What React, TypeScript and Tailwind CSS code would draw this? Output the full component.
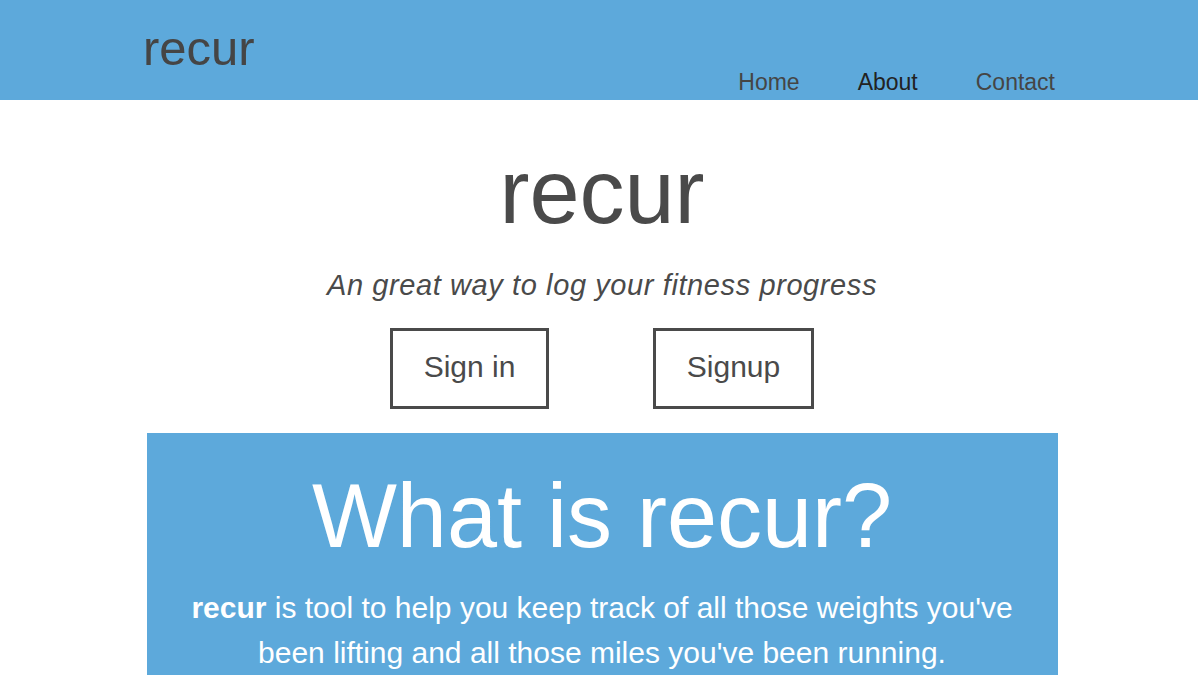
const FONT = "font-['Liberation_Sans','Helvetica_Neue',Arial,sans-serif]";

export default function App() {
  return (
    <div className={`min-h-screen bg-white ${FONT} text-[#4a4a4a]`}>
      <header className="h-[100px] bg-[#5da9db]">
        <div className="mx-auto flex w-[912px] items-start justify-between">
          <a href="#" className="pt-[24px] text-[49px] leading-none text-[#454545]">
            recur
          </a>
          <nav className="flex items-start gap-[58px] pt-[71px] text-[23px] leading-none">
            <a href="#" className="text-[#454545]">Home</a>
            <a href="#" className="text-[#222]">About</a>
            <a href="#" className="text-[#454545]">Contact</a>
          </nav>
        </div>
      </header>

      <main className="pl-[6px]">
        <section className="flex flex-col items-center pt-[47px]">
          <h1 className="text-[90px] leading-none text-[#4a4a4a]">recur</h1>
          <p className="mt-[31px] text-[29px] leading-[1.2] tracking-[0.6px] italic text-[#4a4a4a]">
            An great way to log your fitness progress
          </p>
          <div className="mt-[25px] flex gap-[104px]">
            <button className="w-[159px] border-[3px] border-[#4a4a4a] pt-[15px] pb-[18px] text-[30px] leading-[42px] text-[#4a4a4a]">
              Sign in
            </button>
            <button className="w-[161px] border-[3px] border-[#4a4a4a] pt-[15px] pb-[18px] text-[30px] leading-[42px] text-[#4a4a4a]">
              Signup
            </button>
          </div>
        </section>

        <section className="mx-auto mt-[24px] w-[911px] bg-[#5da9db] px-[30px] pt-[38px] pb-[40px] text-center text-white">
          <h2 className="text-[90px] leading-none">What is recur?</h2>
          <p className="mt-[24px] text-[30px] leading-[45px]">
            <strong className="font-bold">recur</strong> is tool to help you keep track of all those weights you've
            been lifting and all those miles you've been running.
          </p>
        </section>
      </main>
    </div>
  );
}
